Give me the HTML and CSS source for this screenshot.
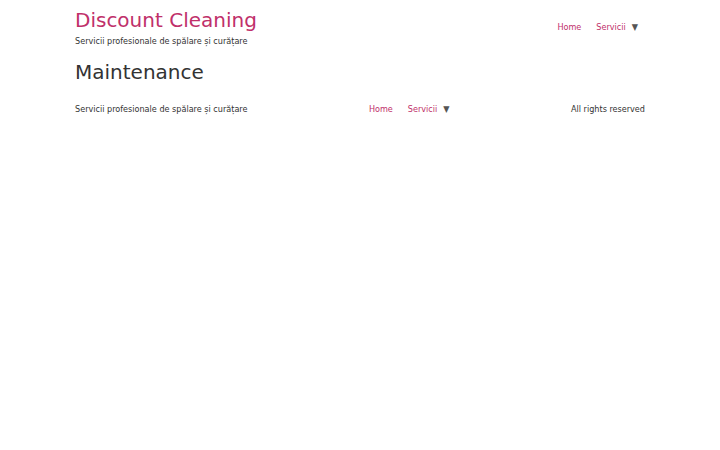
FILE: index.html
```html
<!DOCTYPE html>
<html lang="ro">
<head>
    <meta charset="UTF-8">
    <title>Maintenance - Discount Cleaning</title>
    <link rel="stylesheet" href="styles.css">
</head>
<body>
    <div class="container">
        <header class="site-header">
            <div class="brand">
                <a class="site-title" href="#">Discount Cleaning</a>
                <p class="tagline">Servicii profesionale de spălare și curățare</p>
            </div>
            <nav class="menu">
                <a href="#">Home</a>
                <a href="#">Servicii</a>
                <button class="toggle">▼</button>
            </nav>
        </header>

        <h1>Maintenance</h1>

        <footer class="site-footer">
            <p class="tagline">Servicii profesionale de spălare și curățare</p>
            <nav class="menu">
                <a href="#">Home</a>
                <a href="#">Servicii</a>
                <button class="toggle">▼</button>
            </nav>
            <p class="copy">All rights reserved</p>
        </footer>
    </div>
</body>
</html>
```

FILE: styles.css
```css
body {
    font-family: "DejaVu Sans", sans-serif;
    background: #ffffff;
    color: #333333;
    margin: 0;
}
a {
    color: #c0306a;
    text-decoration: none;
}
p {
    margin: 0;
}
.container {
    width: 570px;
    margin: 0 auto;
}
.site-header {
    display: flex;
    justify-content: space-between;
    align-items: flex-start;
    padding-top: 8px;
}
.site-title {
    display: block;
    font-size: 20px;
    line-height: 24px;
}
.tagline,
.menu,
.copy {
    font-family: "DejaVu Sans Condensed", "DejaVu Sans", sans-serif;
    font-size: 9px;
    line-height: 12px;
}
.brand .tagline {
    margin-top: 3px;
}
.menu {
    display: flex;
    align-items: center;
    gap: 15px;
}
.site-header .menu {
    margin-top: 13px;
    margin-right: 7px;
}
.toggle {
    background: none;
    border: none;
    padding: 0;
    margin-left: -9px;
    font-size: 9px;
    line-height: 12px;
    color: #555555;
    font-family: inherit;
}
h1 {
    font-size: 20px;
    line-height: 24px;
    font-weight: normal;
    margin: 13px 0 0;
}
.site-footer {
    display: flex;
    justify-content: space-between;
    align-items: center;
    margin-top: 19px;
}
```
